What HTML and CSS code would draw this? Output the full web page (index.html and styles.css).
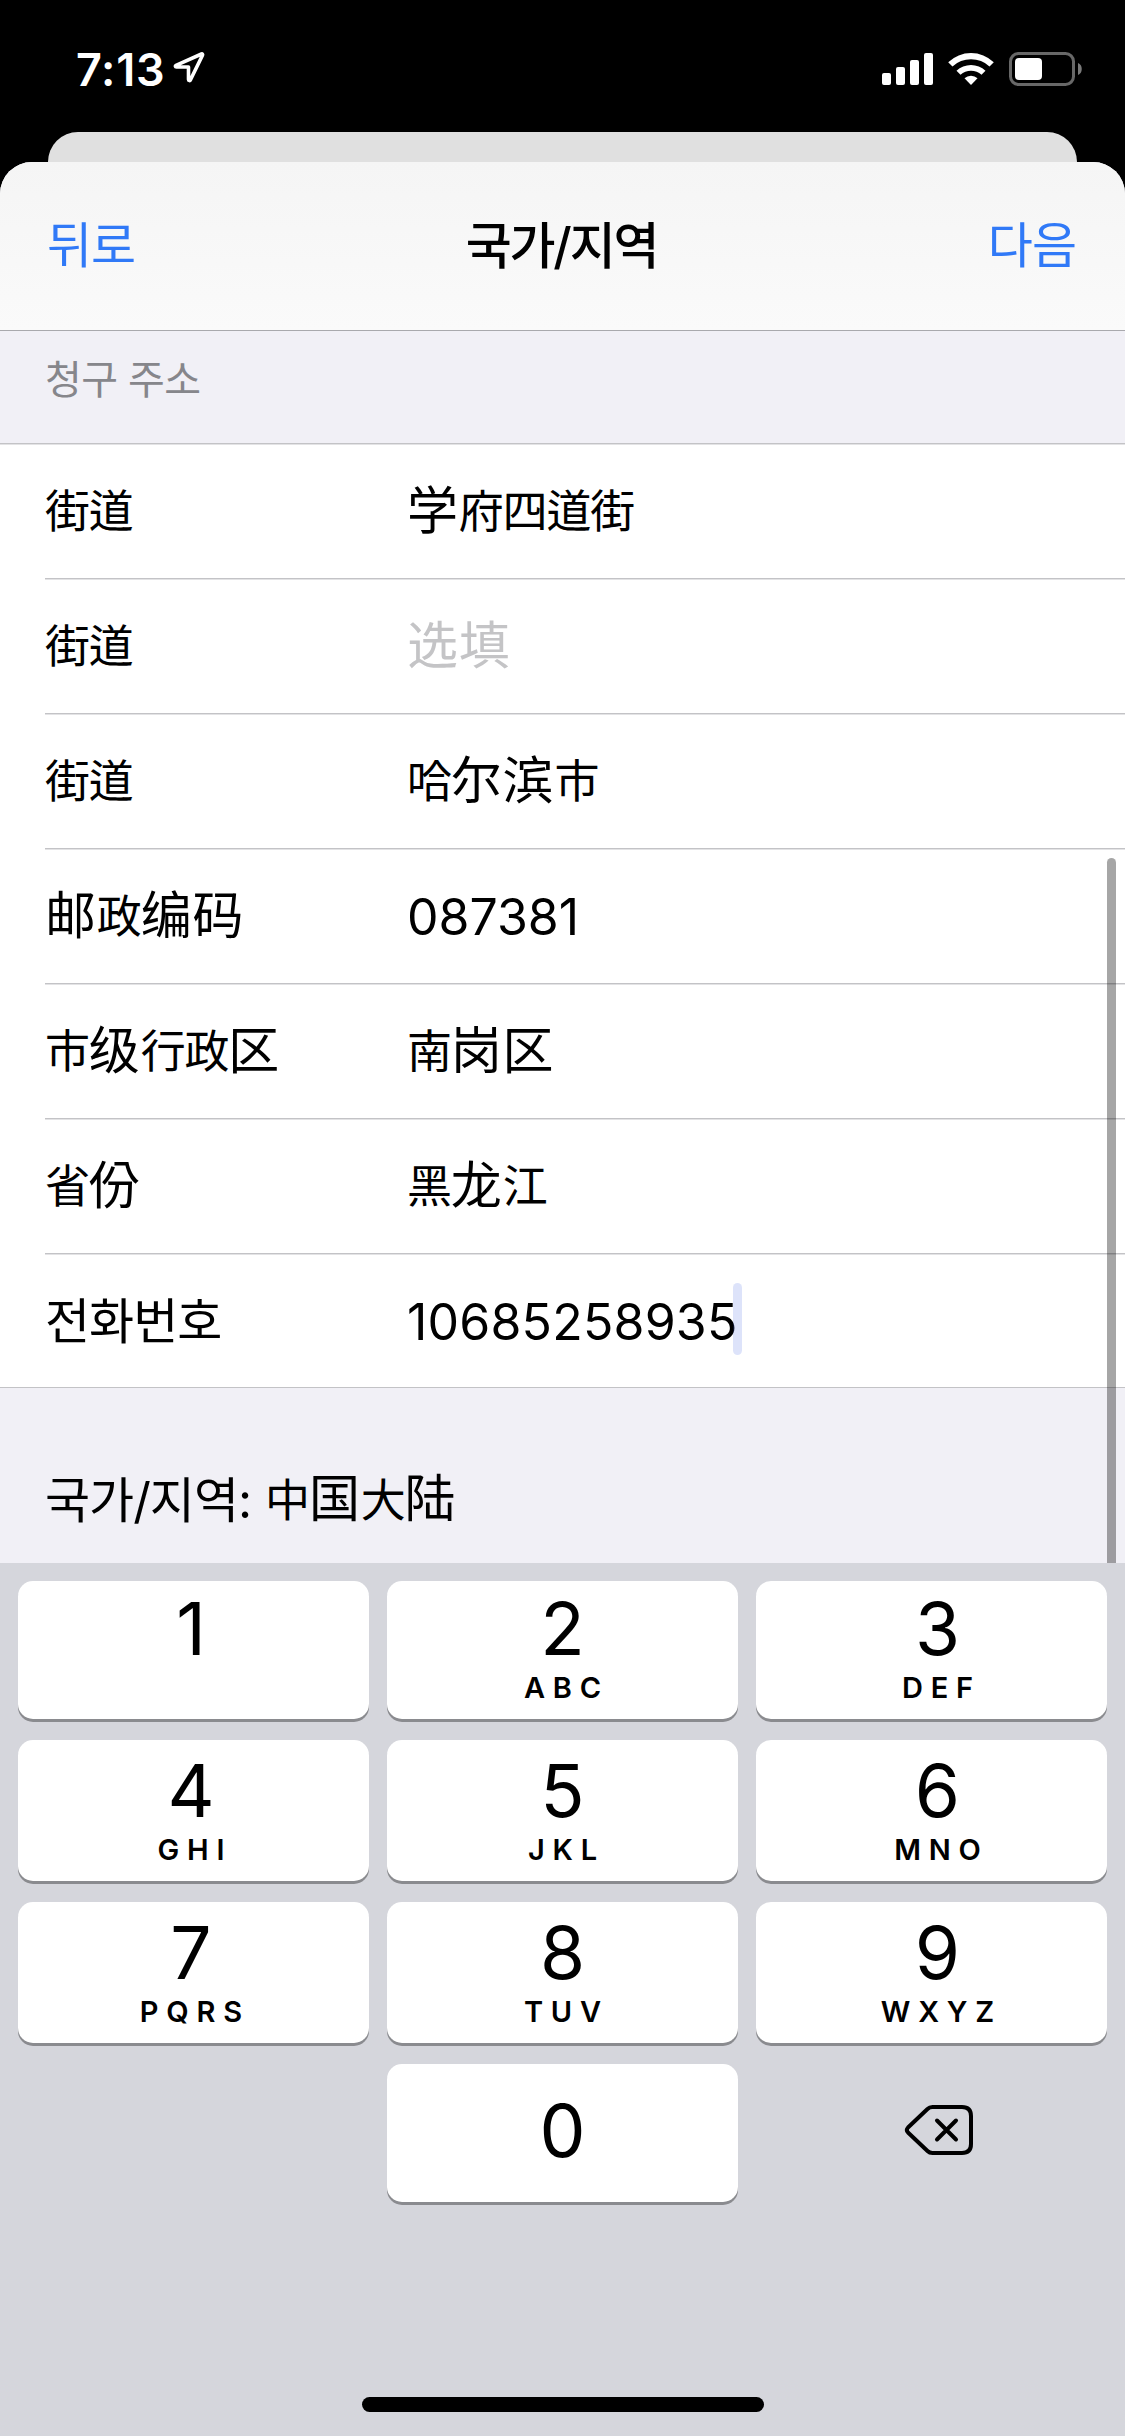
FILE: index.html
```html
<!DOCTYPE html>
<html lang="ko">
<head>
<meta charset="utf-8">
<title>국가/지역</title>
<link rel="stylesheet" href="styles.css">
</head>
<body>
<div class="screen">
  <header class="status">
    <div class="status-left">
      <span class="clock">7:13</span>
      <svg class="location" width="32" height="32" viewBox="0 0 32 32"><path d="M28.500 3 3 14.300c-1 .5-.8 1.700.4 1.700H15.500V28.500c0 1.300 1.500 1.500 2 .3L29.500 4.200c.4-.9-.2-1.500-1-1.200Z"/></svg>
    </div>
    <svg class="indicators" width="202" height="36" viewBox="881 51 202 36">
      <g fill="#fff">
        <rect x="882" y="73" width="9" height="12" rx="2"/>
        <rect x="896" y="67" width="9" height="18" rx="2"/>
        <rect x="910" y="60" width="9" height="25" rx="2"/>
        <rect x="924" y="53" width="9" height="32" rx="2"/>
        <path d="M971 85l-6.500-6.800a9.500 9.500 0 0 1 13 0Z"/>
        <path d="M960.500 74.800l-4-4a21 21 0 0 1 29 0l-4 4a15.500 15.500 0 0 0-21 0Z"/>
        <path d="M952.500 66.500l-4.300-4.300a33 33 0 0 1 45.600 0l-4.300 4.300a27 27 0 0 0-37 0Z"/>
        <rect x="1015" y="58" width="27" height="22" rx="4"/>
      </g>
      <rect x="1010.500" y="53.500" width="63" height="31" rx="8" fill="none" stroke="#686868" stroke-width="3"/>
      <path d="M1078 63c5 1.500 5 10.500 0 12Z" fill="#7a7a7a"/>
    </svg>
  </header>
  <div class="sheet-behind"></div>
  <main class="sheet">
    <nav class="navbar">
      <span class="nav-action">뒤로</span>
      <h1 class="nav-title">국가/지역</h1>
      <span class="nav-action nav-next">다음</span>
    </nav>
    <div class="content">
      <h2 class="section-title">청구 주소</h2>
      <div class="form">
        <div class="row"><span class="label">街道</span><span class="value"><b>学</b>府四道街</span></div>
        <div class="row"><span class="label">街道</span><span class="value placeholder"><b>选填</b></span></div>
        <div class="row"><span class="label">街道</span><span class="value">哈<b>尔滨</b>市</span></div>
        <div class="row"><span class="label"><b>邮</b>政<b>编码</b></span><span class="value digits">087381</span></div>
        <div class="row"><span class="label">市<b>级</b>行政<b>区</b></span><span class="value">南<b>岗区</b></span></div>
        <div class="row"><span class="label">省<b>份</b></span><span class="value">黑<b>龙</b>江</span></div>
        <div class="row"><span class="label hangul">전화번호</span><span class="value digits phone">10685258935<i class="caret"></i></span></div>
      </div>
      <p class="country"><span class="hangul">국가/지역:</span><span class="country-name">中<b>国</b>大<b>陆</b></span></p>
      <div class="scroll-thumb"></div>
    </div>
  </main>
  <section class="keyboard">
    <div class="keys">
      <div class="key left"><span class="num">1</span></div>
      <div class="key"><span class="num">2</span><span class="abc">ABC</span></div>
      <div class="key right"><span class="num">3</span><span class="abc">DEF</span></div>
      <div class="key tall left"><span class="num">4</span><span class="abc">GHI</span></div>
      <div class="key tall"><span class="num">5</span><span class="abc">JKL</span></div>
      <div class="key tall right"><span class="num">6</span><span class="abc">MNO</span></div>
      <div class="key tall left"><span class="num">7</span><span class="abc">PQRS</span></div>
      <div class="key tall"><span class="num">8</span><span class="abc">TUV</span></div>
      <div class="key tall right"><span class="num">9</span><span class="abc">WXYZ</span></div>
      <div></div>
      <div class="key zero"><span class="num">0</span></div>
      <div class="delete">
        <svg width="70" height="52" viewBox="0 0 70 52" fill="none" stroke="#000" stroke-width="4" stroke-linecap="round" stroke-linejoin="round"><path d="M28.500 3H58q9 0 9 9v28q0 9-9 9H28.500q-3 0-5-2L4 28.500q-2.300-2.500 0-5L23.500 5q2-2 5-2Z"/><path d="M33 16.500 52 35.500M52 16.500 33 35.500"/></svg>
      </div>
    </div>
    <div class="home-indicator"></div>
  </section>
</div>
</body>
</html>
```
FILE: styles.css
```css
* { box-sizing: border-box; }
body { margin: 0; background: #000; }
.screen {
  width: 1125px;
  height: 2436px;
  overflow: hidden;
  display: flex;
  flex-direction: column;
  background: #000;
  color: #000;
  font-family: Inter, "Noto Sans CJK KR", sans-serif;
}
.status {
  height: 132px;
  flex: none;
  padding: 51px 42px 0 76px;
  display: flex;
  justify-content: space-between;
  align-items: flex-start;
}
.status-left { display: flex; gap: 8px; }
.clock {
  color: #fff;
  font-size: 45px;
  font-weight: 600;
  letter-spacing: .7px;
  line-height: 37px;
}
.location { fill: none; stroke: #fff; stroke-width: 3.6; stroke-linejoin: round; }
.sheet-behind {
  height: 30px;
  flex: none;
  margin: 0 48px;
  border-radius: 30px 30px 0 0;
  background: #e0e0e0;
}
.sheet {
  height: 1401px;
  flex: none;
  border-radius: 32px 32px 0 0;
  overflow: hidden;
  background: #f1f0f6;
}
.navbar {
  height: 169px;
  padding: 0 49px 0 47px;
  display: grid;
  grid-template-columns: 1fr auto 1fr;
  align-items: center;
  background: linear-gradient(#f5f5f5, #fafafa);
  border-bottom: 1px solid #a9a9ad;
}
.nav-action { color: #3079f7; font-size: 49px; letter-spacing: -1px; line-height: 60px; }
.nav-next { text-align: right; }
.nav-title { margin: 0; font-size: 50px; font-weight: 500; letter-spacing: -2.2px; line-height: 60px; }
.content { position: relative; height: 1232px; }
.section-title {
  margin: 0;
  height: 112px;
  padding: 22px 45px 0;
  color: #86868b;
  font-size: 40px;
  font-weight: 400;
  letter-spacing: -.6px;
  line-height: 54px;
}
.form {
  display: grid;
  grid-template-rows: repeat(6, 135px) 134px;
  background: #fff;
  border-bottom: 1px solid #c3c3c6;
}
.row {
  margin-left: 45px;
  padding-top: 2px;
  display: grid;
  grid-template-columns: 362px 1fr;
  align-items: center;
  border-top: 1px solid #c3c3c6;
  box-shadow: inset 0 1px #e3e3e5;
  font-family: Inter, "Noto Sans CJK SC", sans-serif;
  font-size: 45px;
  letter-spacing: -1.2px;
  line-height: 60px;
}
.row:first-child { margin-left: 0; padding-left: 45px; }
.row b, .country b { font-size: 51px; font-weight: 400; letter-spacing: .8px; line-height: 1; }
.row b { vertical-align: -1px; }
.placeholder { color: #c4c4c6; }
.row .digits { margin-top: -1px; font-size: 50px; letter-spacing: 0; }
.row .phone { margin-top: 1px; letter-spacing: .2px; }
.hangul { font-family: Inter, "Noto Sans CJK KR", sans-serif; font-size: 49px; letter-spacing: -1px; }
.caret {
  display: inline-block;
  width: 9px;
  height: 72px;
  margin: -14px 0 -6px -5px;
  vertical-align: middle;
  border-radius: 5px;
  background: rgba(64, 100, 230, .18);
  position: relative;
  top: -3px;
}
.country {
  margin: 83px 45px 0;
  display: flex;
  align-items: center;
  gap: 14px;
  font-family: Inter, "Noto Sans CJK SC", sans-serif;
  font-size: 45px;
  letter-spacing: -1.200px;
  line-height: 60px;
}
.scroll-thumb {
  position: absolute;
  top: 527px;
  right: 9px;
  bottom: 0;
  width: 9px;
  border-radius: 5px 5px 0 0;
  background: rgba(0, 0, 0, .35);
}
.keyboard {
  flex: 1;
  padding: 18px 18px 24px;
  display: flex;
  flex-direction: column;
  justify-content: space-between;
  align-items: center;
  background: #d5d6dc;
}
.keys {
  width: 100%;
  display: grid;
  grid-template-columns: repeat(3, 1fr);
  grid-template-rows: 138px 141px 141px 138px;
  gap: 21px 18px;
}
.key {
  padding-top: 16px;
  display: flex;
  flex-direction: column;
  align-items: center;
  border-radius: 15px;
  background: #fff;
  box-shadow: 0 3px #8a8b8f;
}
.tall { padding-top: 19px; }
.zero { padding-top: 35px; }
.left { padding-right: 5px; }
.right { padding-left: 12px; }
.num { height: 64px; font-size: 73px; line-height: 64px; }
.abc { margin-top: 11px; font-size: 29px; font-weight: 600; letter-spacing: 7.8px; margin-right: -7.8px; line-height: 32px; }
.delete { display: flex; justify-content: center; align-items: center; padding: 0 0 6px 15px; }
.home-indicator { width: 402px; height: 15px; border-radius: 8px; background: #000; }
```
